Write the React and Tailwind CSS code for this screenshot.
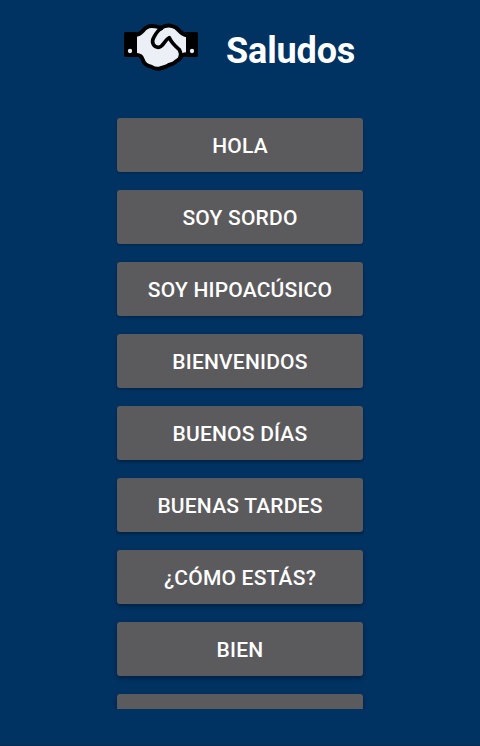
import clsx from 'clsx';

// The shadow gets deeper the further down the list a button sits
const GREETINGS = [
  { label: 'Hola', shadow: 'shadow-[0_1px_2px_rgba(0,0,0,0.25)]' },
  { label: 'Soy sordo', shadow: 'shadow-[0_1px_2px_rgba(0,0,0,0.28)]' },
  { label: 'Soy hipoacúsico', shadow: 'shadow-[0_1px_3px_rgba(0,0,0,0.3)]' },
  { label: 'Bienvenidos', shadow: 'shadow-[0_1px_3px_rgba(0,0,0,0.32)]' },
  { label: 'Buenos días', shadow: 'shadow-[0_2px_3px_rgba(0,0,0,0.32)]' },
  { label: 'Buenas tardes', shadow: 'shadow-[0_2px_3px_rgba(0,0,0,0.34)]' },
  { label: '¿Cómo estás?', shadow: 'shadow-[0_2px_4px_rgba(0,0,0,0.34)]' },
  { label: 'Bien', shadow: 'shadow-[0_2px_4px_rgba(0,0,0,0.36)]' },
  { label: '', shadow: 'shadow-[0_2px_4px_rgba(0,0,0,0.36)]' },
];

function HandshakeIcon({ className }) {
  return (
    <svg viewBox="27 24 222 144" className={className} aria-hidden="true">
      <rect x="27" y="51" width="40" height="75" rx="5" fill="#000" />
      <rect x="209" y="51" width="40" height="75" rx="5" fill="#000" />
      <path
        d="M66 62 C78 61 82 48 94 39 C101 33 112 33 121 35 L138 40 C152 31 170 31 183 40 C193 48 197 59 213 63 L213 115 C203 114 201 117 197 126 C192 134 185 135 180 139 C175 147 165 147 160 150 C151 157 141 158 134 161 C124 163 116 158 108 153 C96 150 90 145 86 134 C82 124 78 117 66 116 Z"
        fill="#eceff5"
      />
      <path
        d="M62 59 C78 59 82 46 94 38 C101 32 112 32 121 34 L138 38 C152 30 170 30 183 38 C193 46 197 58 217 61 M62 119 C78 120 80 126 84 136 C88 147 96 152 108 155 C116 160 124 163 134 161 C141 158 151 157 160 151 C165 148 175 148 181 141 C186 136 192 135 197 128 C201 120 203 118 217 118"
        fill="none"
        stroke="#000"
        strokeWidth="12"
        strokeLinejoin="round"
      />
      <path
        d="M139 41 C129 45 123 54 116 68 C108 82 116 97 130 97 C146 97 146 76 163 68 C169 84 184 96 193 104 C197 111 198 119 195 127"
        fill="none"
        stroke="#000"
        strokeWidth="11"
        strokeLinecap="round"
        strokeLinejoin="round"
      />
      <circle cx="45" cy="108" r="6.5" fill="#eceff5" />
      <circle cx="231" cy="108" r="6.5" fill="#eceff5" />
    </svg>
  );
}

function GreetingButton({ label, shadow }) {
  return (
    <button
      className={clsx(
        'h-[54px] w-[246px] shrink-0 rounded-[3px] bg-[#5b5a5c] pt-0.5 text-[21px] font-medium leading-none tracking-[0.2px] text-white uppercase',
        shadow
      )}
    >
      {label}
    </button>
  );
}

export default function App() {
  return (
    <div className="flex h-[746px] w-[480px] flex-col items-center border-b border-[#00284f] bg-[#003262] font-['Roboto',sans-serif]">
      <header className="flex h-[109px] w-full shrink-0 items-start pl-[124px]">
        <HandshakeIcon className="mt-[23px] h-12 w-[74px]" />
        <h1 className="mt-[30px] ml-7 text-[36px] leading-[42px] font-bold tracking-[-0.15px] text-white">Saludos</h1>
      </header>

      <main className="flex h-[600px] w-full shrink-0 flex-col items-center gap-[18px] overflow-hidden pt-[9px]">
        {GREETINGS.map((greeting, index) => (
          <GreetingButton key={index} {...greeting} />
        ))}
      </main>
    </div>
  );
}
